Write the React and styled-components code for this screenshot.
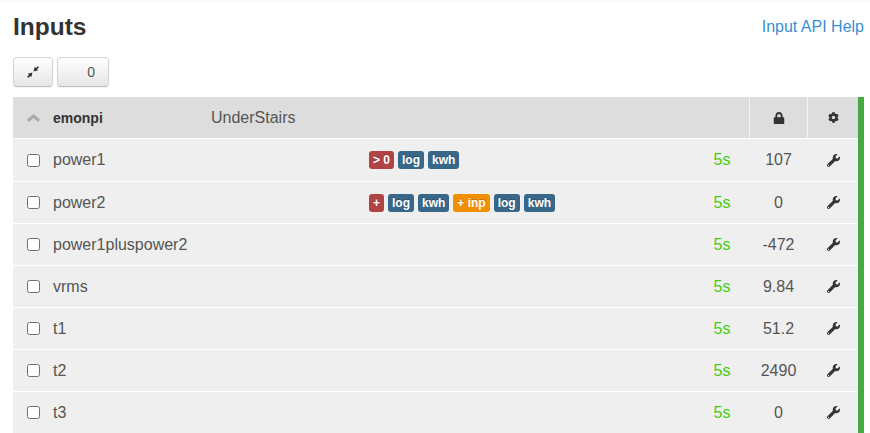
import React from "react";
import styled, {createGlobalStyle} from "styled-components";
import {FaWrench, FaLock, FaCog} from "react-icons/fa";

const GlobalStyle = createGlobalStyle`
    html, body {
        margin: 0;
        padding: 0;
        background: #fff;
        overflow: hidden;
    }
    body {
        font-family: "Liberation Sans", Arial, sans-serif;
    }
`;

const Page = styled.div`
    width: 870px;
    height: 433px;
    box-sizing: border-box;
    padding: 0 6px 0 13px;
    overflow: hidden;
    border-top: 1px solid #fafafa;
`;
const TitleBar = styled.div`
    display: flex;
    justify-content: space-between;
    align-items: flex-start;
    height: 56px;
`;
const Title = styled.h2`
    margin: 11px 0 0;
    font-size: 24.5px;
    line-height: 30px;
    font-weight: bold;
    color: #333;
`;
const HelpLink = styled.a`
    margin-top: 16px;
    font-size: 16px;
    line-height: 20px;
    color: #3a8fd1;
    text-decoration: none;
`;
const Toolbar = styled.div`
    display: flex;
    gap: 4px;
    height: 40px;
`;
const ToolButton = styled.button`
    display: flex;
    align-items: center;
    justify-content: ${p => p.$wide ? "flex-end" : "center"};
    box-sizing: border-box;
    width: ${p => p.$wide ? "52px" : "40px"};
    height: 30px;
    padding: ${p => p.$wide ? "0 13px 0 0" : "0"};
    border: 1px solid #d4d4d4;
    border-bottom-color: #bdbdbd;
    border-radius: 4px;
    background: linear-gradient(#ffffff, #e6e6e6);
    box-shadow: inset 0 1px 0 rgba(255, 255, 255, .2), 0 1px 2px rgba(0, 0, 0, .05);
    font-family: inherit;
    font-size: 14px;
    color: #555;
`;
const Node = styled.div`
    display: flex;
    border-right: 6px solid #44aa44;
`;
const Rows = styled.div`
    flex: 1;
    display: flex;
    flex-direction: column;
`;
const HeaderRow = styled.div`
    display: flex;
    align-items: stretch;
    height: 41px;
    background: #dddddd;
    border-bottom: 1px solid #fff;
`;
const Row = styled.div`
    display: flex;
    align-items: stretch;
    height: ${p => p.$first ? "42px" : "41px"};
    background: #efefef;
    border-bottom: 1px solid #fff;
`;
const Lead = styled.div`
    flex: none;
    width: 40px;
    display: flex;
    align-items: center;
    justify-content: center;
`;
const Check = styled.span`
    display: block;
    box-sizing: border-box;
    width: 13px;
    height: 13px;
    border: 1px solid #707070;
    border-radius: 2.5px;
    background: #fff;
`;
const NodeName = styled.div`
    flex: none;
    width: 158px;
    align-self: center;
    font-size: 14px;
    font-weight: bold;
    color: #333;
`;
const Description = styled.div`
    flex: 1;
    align-self: center;
    font-size: 16px;
    color: #555;
`;
const InputName = styled.div`
    flex: none;
    width: 316px;
    align-self: center;
    font-size: 16px;
    color: #555;
`;
const Processes = styled.div`
    flex: 1;
    display: flex;
    align-items: center;
    gap: 4px;
`;
const Badge = styled.span`
    display: block;
    padding: 0 4px;
    height: 18px;
    line-height: 18px;
    border-radius: 3px;
    font-size: 12px;
    font-weight: bold;
    color: #fff;
    text-shadow: 0 -1px 0 rgba(0, 0, 0, .25);
    background: ${p => p.$color};
`;
const Interval = styled.div`
    flex: none;
    width: 36px;
    margin-right: 9px;
    align-self: center;
    text-align: center;
    font-size: 16px;
    color: #44cc11;
`;
const Cell = styled.div`
    flex: none;
    box-sizing: border-box;
    width: ${p => p.$width}px;
    display: flex;
    align-items: center;
    justify-content: center;
    font-size: 16px;
    color: #555;
    border-left: 1px solid ${p => p.$divider ? "#f4f4f4" : "transparent"};
    svg {
        color: #333;
    }
`;

const RED = "#b04444";
const BLUE = "#38678a";
const ORANGE = "#f09000";

const inputs = [
    {name: "power1", value: "107", processes: [["> 0", RED], ["log", BLUE], ["kwh", BLUE]]},
    {name: "power2", value: "0", processes: [["+", RED], ["log", BLUE], ["kwh", BLUE], ["+ inp", ORANGE], ["log", BLUE], ["kwh", BLUE]]},
    {name: "power1pluspower2", value: "-472", processes: []},
    {name: "vrms", value: "9.84", processes: []},
    {name: "t1", value: "51.2", processes: []},
    {name: "t2", value: "2490", processes: []},
    {name: "t3", value: "0", processes: []},
];

//collapse arrows, the icon font has a diagonal pair
function CollapseIcon() {
    return (
        <svg width="14" height="14" viewBox="0 0 14 14" fill="#333">
            <path d="M13 2.4 11.8 1.2 10 3 8.8 1.8 7.5 6.5 12.2 5.2 11 4Z"/>
            <path d="M1 11.6 2.4 13 4 11 5.2 12.2 6.5 7.5 1.8 8.8 3 10Z"/>
        </svg>
    );
}

function ChevronIcon() {
    return (
        <svg width="13" height="8" viewBox="0 0 13 8" fill="#aaaaaa">
            <path d="M6.5 0 13 5.6 11 8 6.5 4 2 8 0 5.6Z"/>
        </svg>
    );
}

export default function App() {
    return (
        <Page>
            <GlobalStyle/>
            <TitleBar>
                <Title>Inputs</Title>
                <HelpLink href="#">Input API Help</HelpLink>
            </TitleBar>
            <Toolbar>
                <ToolButton><CollapseIcon/></ToolButton>
                <ToolButton $wide>0</ToolButton>
            </Toolbar>
            <Node>
                <Rows>
                    <HeaderRow>
                        <Lead><ChevronIcon/></Lead>
                        <NodeName>emonpi</NodeName>
                        <Description>UnderStairs</Description>
                        <Cell $width={58} $divider><FaLock size={12}/></Cell>
                        <Cell $width={51} $divider><FaCog size={11}/></Cell>
                    </HeaderRow>
                    {inputs.map((input, i) => (
                        <Row key={input.name} $first={i === 0}>
                            <Lead><Check/></Lead>
                            <InputName>{input.name}</InputName>
                            <Processes>
                                {input.processes.map(([label, color], j) => (
                                    <Badge key={j} $color={color}>{label}</Badge>
                                ))}
                            </Processes>
                            <Interval>5s</Interval>
                            <Cell $width={58}>{input.value}</Cell>
                            <Cell $width={51}><FaWrench size={13}/></Cell>
                        </Row>
                    ))}
                </Rows>
            </Node>
        </Page>
    );
}
